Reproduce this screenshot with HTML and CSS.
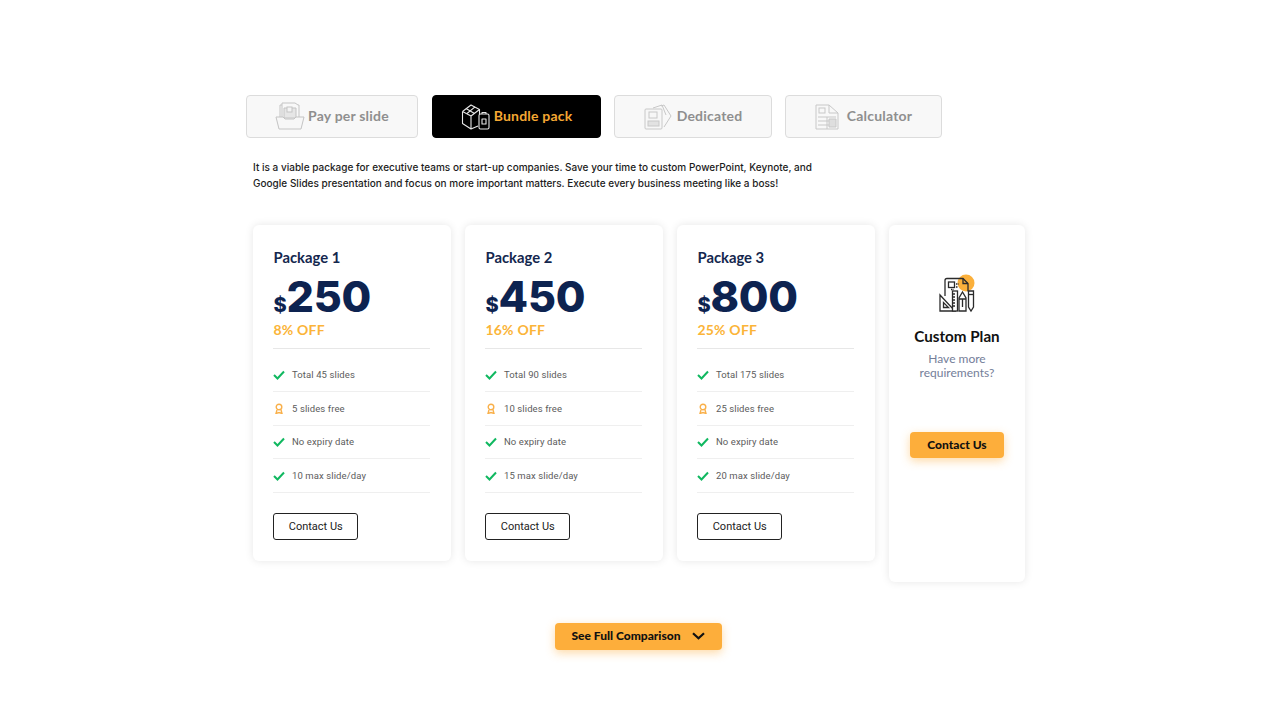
FILE: index.html
```html
<!DOCTYPE html>
<html lang="en">
<head>
<meta charset="utf-8">
<title>Pricing</title>
<link rel="stylesheet" href="styles.css">
</head>
<body>
<main class="page">
  <nav class="tabs">
    <a class="tab tab-1">
      <svg class="tab-icon" width="30" height="30" viewBox="0 0 30 30" fill="none" stroke="#c4c4c4" stroke-width="1"><path d="M5 16V3h2V1h13l3 2h1v13"/><path d="M7 3v13M9 6h12v10H9z" fill="#e6e6e6"/><rect x="12" y="5" width="5" height="5" fill="#f4f4f4"/><path d="M1 15h7l2 2h9l2-2h8l-3 12H4z" fill="#f7f7f7"/></svg>
      <span class="tab-label">Pay per slide</span>
    </a>
    <a class="tab tab-2 is-active">
      <svg class="tab-icon" width="30" height="28" viewBox="0 0 30 28" fill="none" stroke="#e8e8e8" stroke-width="1.1" stroke-linejoin="round"><path d="M1.500 8.500 10 2l8.500 4.500v5"/><path d="M1.500 8.500v12L10 26l7-3M1.500 8.500 10 13v13M10 13l8.500-6.500"/><path d="m5 5.500 8.500 5M14 3.800 6 10.500"/><rect x="18" y="11" width="10" height="15" rx="1.500" fill="#000"/><path d="M21 11V9.500h4V11"/><rect x="21" y="16" width="4" height="5"/></svg>
      <span class="tab-label">Bundle pack</span>
    </a>
    <a class="tab tab-3">
      <svg class="tab-icon" width="28" height="26" viewBox="0 0 28 26" fill="none" stroke="#c8c8c8" stroke-width="1"><path d="m17 2 3-1 7 11-7 11"/><path d="m9 4 9-3 4 10"/><rect x="1" y="5" width="17" height="20" rx="1" fill="#f7f7f7"/><rect x="5" y="8" width="8" height="6"/><rect x="4" y="17" width="11" height="5" fill="#e2e2e2"/></svg>
      <span class="tab-label">Dedicated</span>
    </a>
    <a class="tab tab-4">
      <svg class="tab-icon" width="24" height="26" viewBox="0 0 24 26" fill="none" stroke="#c8c8c8" stroke-width="1"><path d="M1 1h13l9 8v16H1z"/><path d="M14 1v8h9"/><rect x="4" y="4" width="6" height="5"/><path d="M3 13h18M3 17h18M3 21h18M12 13v12"/><path d="M14 15h7v8h-7z" fill="#dedede"/></svg>
      <span class="tab-label">Calculator</span>
    </a>
  </nav>

  <p class="intro">It is a viable package for executive teams or start-up companies. Save your time to custom PowerPoint, Keynote, and<br>Google Slides presentation and focus on more important matters. Execute every business meeting like a boss!</p>

  <section class="plans">
    <article class="card">
      <h2 class="pack">Package 1</h2>
      <p class="price"><span class="cur">$</span>250</p>
      <p class="off">8% OFF</p>
      <ul class="feats">
        <li><svg class="ic" width="12" height="10" viewBox="0 0 12 10"><path d="m1 5 3.500 3.500L11 1.500" fill="none" stroke="#10b860" stroke-width="2"/></svg>Total 45 slides</li>
        <li><svg class="ic" width="12" height="11" viewBox="0 0 12 11" fill="none" stroke="#f9b04a" stroke-width="1.400"><circle cx="6" cy="4" r="2.800"/><path d="m4 7-1 3.500 3-1 3 1L8 7"/></svg>5 slides free</li>
        <li><svg class="ic" width="12" height="10" viewBox="0 0 12 10"><path d="m1 5 3.500 3.500L11 1.500" fill="none" stroke="#10b860" stroke-width="2"/></svg>No expiry date</li>
        <li><svg class="ic" width="12" height="10" viewBox="0 0 12 10"><path d="m1 5 3.500 3.500L11 1.500" fill="none" stroke="#10b860" stroke-width="2"/></svg>10 max slide/day</li>
      </ul>
      <a class="outline">Contact Us</a>
    </article>
    <article class="card">
      <h2 class="pack">Package 2</h2>
      <p class="price"><span class="cur">$</span>450</p>
      <p class="off">16% OFF</p>
      <ul class="feats">
        <li><svg class="ic" width="12" height="10" viewBox="0 0 12 10"><path d="m1 5 3.500 3.500L11 1.500" fill="none" stroke="#10b860" stroke-width="2"/></svg>Total 90 slides</li>
        <li><svg class="ic" width="12" height="11" viewBox="0 0 12 11" fill="none" stroke="#f9b04a" stroke-width="1.400"><circle cx="6" cy="4" r="2.800"/><path d="m4 7-1 3.500 3-1 3 1L8 7"/></svg>10 slides free</li>
        <li><svg class="ic" width="12" height="10" viewBox="0 0 12 10"><path d="m1 5 3.500 3.500L11 1.500" fill="none" stroke="#10b860" stroke-width="2"/></svg>No expiry date</li>
        <li><svg class="ic" width="12" height="10" viewBox="0 0 12 10"><path d="m1 5 3.500 3.500L11 1.500" fill="none" stroke="#10b860" stroke-width="2"/></svg>15 max slide/day</li>
      </ul>
      <a class="outline">Contact Us</a>
    </article>
    <article class="card">
      <h2 class="pack">Package 3</h2>
      <p class="price"><span class="cur">$</span>800</p>
      <p class="off">25% OFF</p>
      <ul class="feats">
        <li><svg class="ic" width="12" height="10" viewBox="0 0 12 10"><path d="m1 5 3.500 3.500L11 1.500" fill="none" stroke="#10b860" stroke-width="2"/></svg>Total 175 slides</li>
        <li><svg class="ic" width="12" height="11" viewBox="0 0 12 11" fill="none" stroke="#f9b04a" stroke-width="1.400"><circle cx="6" cy="4" r="2.800"/><path d="m4 7-1 3.500 3-1 3 1L8 7"/></svg>25 slides free</li>
        <li><svg class="ic" width="12" height="10" viewBox="0 0 12 10"><path d="m1 5 3.500 3.500L11 1.500" fill="none" stroke="#10b860" stroke-width="2"/></svg>No expiry date</li>
        <li><svg class="ic" width="12" height="10" viewBox="0 0 12 10"><path d="m1 5 3.500 3.500L11 1.500" fill="none" stroke="#10b860" stroke-width="2"/></svg>20 max slide/day</li>
      </ul>
      <a class="outline">Contact Us</a>
    </article>
    <article class="card custom">
      <svg class="custom-icon" width="36" height="40" viewBox="0 0 36 40" fill="none" stroke="#2b2b2b" stroke-width="1.300">
        <circle cx="27" cy="9" r="8.500" fill="#fbb03b" stroke="none"/>
        <path d="M6 22V6.500A2 2 0 0 1 8 4.500h16l5 5v8"/><path d="M24 4.500v5h5"/>
        <rect x="9.500" y="8" width="6" height="5.500"/><path d="M17 10h3M17 13h2M12 15.500h3" stroke-dasharray="1.500 1"/>
        <path d="M1 37V21l15 16z" fill="#fff"/><path d="M4.500 33.500v-5l5 5z"/>
        <rect x="13.500" y="17" width="5" height="20" fill="#fff"/><path d="M13.500 20h2.500M13.500 23h2.500M13.500 26h2.500M13.500 29h2.500M13.500 32h2.500"/>
        <path d="M20 37V24l3.500-6 3.500 6v13z" fill="#fff"/><path d="M20 25h7M23.500 25v8"/>
        <path d="M29.500 17h5v16l-2.500 4-2.500-4z" fill="#fff"/><path d="M29.500 20.500h5"/>
      </svg>
      <h2 class="custom-title">Custom Plan</h2>
      <p class="custom-sub">Have more requirements?</p>
      <a class="solid solid-sm">Contact Us</a>
    </article>
  </section>

  <div class="more">
    <a class="solid solid-lg">See Full Comparison
      <svg width="13" height="8" viewBox="0 0 13 8"><path d="m1 1.300 5.500 5 5.500-5" fill="none" stroke="#111" stroke-width="2.200"/></svg>
    </a>
  </div>
</main>
</body>
</html>
```

FILE: styles.css
```css
* { box-sizing: border-box; }
html, body { margin: 0; padding: 0; background: #fff; }
body { height: 720px; overflow: hidden; font-family: "Lato", "Liberation Sans", sans-serif; }
.page { padding: 95px 0 0 246px; }

.tabs { display: flex; gap: 13px; height: 43px; }
.tab {
  display: flex; align-items: center; justify-content: center; gap: 3px;
  height: 43px; border: 1px solid #dcdcdc; border-radius: 4px; background: #f8f8f8;
  color: #8f8f8f; font-size: 14px; font-weight: 700; letter-spacing: .2px;
}
.tab-label { margin-top: -3px; }
.tab-1 { width: 172px; }
.tab-2 { width: 169px; margin-left: 1px; }
.tab-3 { width: 158px; gap: 5px; }
.tab-4 { width: 157px; gap: 8px; }
.tab.is-active { background: #000; border-color: #000; color: #f5a833; }
.tab-icon { flex: none; }

.intro {
  margin: 22px 0 0 7px; color: #1c1c1c;
  font-size: 10px; font-weight: 500; line-height: 15.500px; letter-spacing: .01px;
  font-family: "Inter", "Liberation Sans", sans-serif;
}

.plans { display: flex; align-items: flex-start; gap: 13.300px; margin: 34px 0 0 6.800px; }
.card {
  width: 198.700px; height: 336px; padding: 24px 21px 0 20.700px;
  background: #fff; border-radius: 6px; box-shadow: 0 0 8px rgba(0,0,0,.1);
}
.pack { margin: 0; color: #14274e; font-size: 14.800px; line-height: 17px; font-weight: 700; }
.price {
  display: flex; align-items: baseline; margin: 6px 0 0; color: #0d2350;
  font-family: "Inter", "Liberation Sans", sans-serif; font-size: 43px; line-height: 48px; font-weight: 800; letter-spacing: -.2px;
}
.cur { font-size: 20px; line-height: 20px; margin-right: 0; }
.off { margin: 1px 0 0; color: #fbb438; font-size: 14px; line-height: 18px; font-weight: 700; letter-spacing: .2px; }
.feats { list-style: none; margin: 9px 0 0; padding: 9.500px 0 0; border-top: 1.500px solid #e7e7e7; }
.feats li {
  display: flex; align-items: center; height: 33.600px; border-bottom: 1px solid #efefef;
  color: #5c5c5c; font-family: "Roboto", sans-serif; font-size: 9.500px; letter-spacing: .1px;
}
.ic { flex: none; margin-right: 7px; margin-left: -.5px; }
.outline {
  display: flex; align-items: center; justify-content: center; width: 84.500px; height: 26.500px; margin-top: 20.500px;
  border: 1px solid #222; border-radius: 3px; color: #222; font-family: "Roboto", sans-serif; font-size: 11px; font-weight: 400;
}

.custom { display: flex; flex-direction: column; align-items: center; width: 136.500px; height: 357px; padding: 49px 10px 0; }
.custom-icon { flex: none; margin-left: 0; }
.custom-title { margin: 13px 0 0; color: #111; font-size: 15.200px; line-height: 18px; font-weight: 700; }
.custom-sub { margin: 7px 0 0; width: 90px; text-align: center; color: #747e99; font-size: 12px; line-height: 14px; }

.solid {
  display: flex; align-items: center; justify-content: center; padding-bottom: 2px; background: #fdae3b;
  border-radius: 4px; color: #111; font-weight: 900; box-shadow: 0 3px 10px rgba(253,174,59,.45);
}
.solid-sm { width: 94px; height: 26px; margin-top: 52px; font-size: 12px; }
.solid-lg { width: 167px; height: 27px; gap: 12px; font-size: 12px; }
.more { display: flex; margin: 41px 0 0 309px; }
```
